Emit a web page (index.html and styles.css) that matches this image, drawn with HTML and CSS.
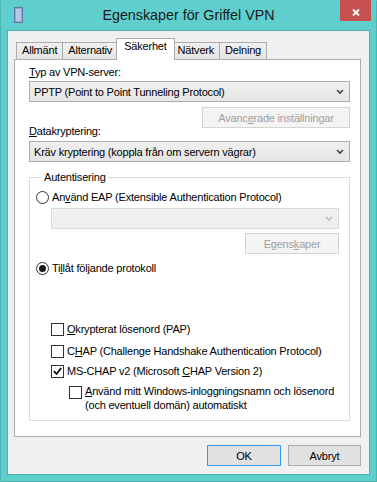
FILE: index.html
```html
<!DOCTYPE html>
<html lang="sv">
<head>
    <meta charset="UTF-8">
    <title>Egenskaper för Griffel VPN</title>
    <link rel="stylesheet" href="styles.css">
</head>
<body>

    <div class="window">
        <div class="titlebar">
            <span class="app-icon">
                <svg width="9" height="16" viewBox="0 0 9 16">
                    <rect x="0.5" y="0.5" width="8" height="15" fill="#8fa9d0" stroke="#5f7aa8"/>
                    <path d="M2 3h5M2 5h5M2 7h5M2 9h5M2 11h5M2 13h5" stroke="#dfe8f5"/>
                </svg>
            </span>
            <span class="title">Egenskaper för Griffel VPN</span>
            <span class="close">
                <svg width="8" height="7" viewBox="0 0 8 7">
                    <path d="M1 0.5L7 6.5M7 0.5L1 6.5" stroke="#fff" stroke-width="1.8"/>
                </svg>
            </span>
        </div>

        <div class="client">
            <div class="tabs">
                <span class="tab">Allmänt</span>
                <span class="tab">Alternativ</span>
                <span class="tab active">Säkerhet</span>
                <span class="tab">Nätverk</span>
                <span class="tab">Delning</span>
            </div>

            <div class="panel">
                <div class="field-label"><u>T</u>yp av VPN-server:</div>
                <div class="combo">
                    <span>PPTP (Point to Point Tunneling Protocol)</span>
                    <svg class="chevron" width="8" height="6" viewBox="0 0 8 6"><path d="M1 1l3 3 3-3" fill="none" stroke="#444" stroke-width="1.6"/></svg>
                </div>
                <button class="btn disabled advanced">Avanc<u>e</u>rade inställningar</button>

                <div class="field-label crypto"><u>D</u>atakryptering:</div>
                <div class="combo combo-crypto">
                    <span>Kräv kryptering (koppla från om servern vägrar)</span>
                    <svg class="chevron" width="8" height="6" viewBox="0 0 8 6"><path d="M1 1l3 3 3-3" fill="none" stroke="#444" stroke-width="1.6"/></svg>
                </div>

                <fieldset class="auth">
                    <legend>Autentisering</legend>

                    <div class="row">
                        <span class="radio"></span>
                        <span>An<u>v</u>änd EAP (Extensible Authentication Protocol)</span>
                    </div>
                    <div class="combo disabled eap-combo">
                        <span></span>
                        <svg class="chevron" width="8" height="6" viewBox="0 0 8 6"><path d="M1 1l3 3 3-3" fill="none" stroke="#bcbcbc" stroke-width="1.6"/></svg>
                    </div>
                    <button class="btn disabled props">Egens<u>k</u>aper</button>

                    <div class="row allow">
                        <span class="radio on"></span>
                        <span>Ti<u>l</u>låt följande protokoll</span>
                    </div>

                    <div class="row option first">
                        <span class="check"></span>
                        <span><u>O</u>krypterat lösenord (PAP)</span>
                    </div>
                    <div class="row option chap">
                        <span class="check"></span>
                        <span>C<u>H</u>AP (Challenge Handshake Authentication Protocol)</span>
                    </div>
                    <div class="row option mschap">
                        <span class="check">
                            <svg width="11" height="11" viewBox="0 0 11 11"><path d="M2 5.2l2.6 2.8L9.2 2" fill="none" stroke="#000" stroke-width="1.7"/></svg>
                        </span>
                        <span>MS-CHAP v2 (Microsoft <u>C</u>HAP Version 2)</span>
                    </div>
                    <div class="sub-option">
                        <span class="check"></span>
                        <span><u>A</u>nvänd mitt Windows-inloggningsnamn och lösenord<br>(och eventuell domän) automatiskt</span>
                    </div>
                </fieldset>
            </div>

            <div class="actions">
                <button class="btn default ok">OK</button>
                <button class="btn cancel">Avbryt</button>
            </div>
        </div>
    </div>

</body>
</html>
```

FILE: styles.css
```css
body {
    margin: 0;
    font-family: "Liberation Sans", Arial, sans-serif;
    font-size: 11px;
    letter-spacing: -0.2px;
    color: #000;
    background: #5ecfcc;
}
.window {
    width: 377px;
    height: 482px;
    box-sizing: border-box;
    border: 1px solid #4db5b2;
    border-top-color: #5ecfcc;
    background: #5ecfcc;
    display: flex;
    flex-direction: column;
}
.titlebar {
    height: 29px;
    display: grid;
    grid-template-columns: 1fr auto 1fr;
    align-items: start;
}
.app-icon {
    padding: 6px 0 0 13px;
    line-height: 0;
}
.title {
    font-size: 14.3px;
    line-height: 20px;
    padding-top: 4px;
    letter-spacing: 0;
    color: #1b1b1b;
}
.close {
    justify-self: end;
    width: 31px;
    height: 21px;
    margin: -1px 5px 0 0;
    background: #c75050;
    display: flex;
    justify-content: center;
    align-items: flex-start;
    padding-top: 9px;
    box-sizing: border-box;
}
.client {
    flex: 1;
    margin: 0 6px 6px;
    padding: 0 8px 0 6px;
    border: 1px solid #4ab1ae;
    background: #f0f0f0;
}
.tabs {
    display: flex;
    align-items: flex-end;
    height: 21px;
    margin: 7px 0 0 2px;
}
.tab {
    height: 17px;
    box-sizing: border-box;
    padding: 0 5px;
    border: 1px solid #acacac;
    border-bottom: 0;
    background: linear-gradient(#f0f0f0, #e5e5e5);
    line-height: 15px;
}
.tab + .tab {
    margin-left: -1px;
}
.tab.active {
    position: relative;
    height: 22px;
    margin: 0 -2px -1px;
    padding: 0 7px;
    background: #fff;
}
.panel {
    border: 1px solid #acacac;
    background: #fff;
    padding: 6px 10px 15px 14px;
}
.field-label {
    line-height: 13px;
}
.combo {
    height: 21px;
    box-sizing: border-box;
    margin-top: 2px;
    padding: 0 5px 0 4px;
    border: 1px solid #acacac;
    background: linear-gradient(#f0f0f0, #e5e5e5);
    display: flex;
    align-items: center;
    justify-content: space-between;
}
.combo.disabled {
    border-color: #d9d9d9;
    background: #efefef;
}
.btn {
    height: 21px;
    box-sizing: border-box;
    padding: 0;
    border: 1px solid #acacac;
    background: #e1e1e1;
    font: inherit;
    letter-spacing: inherit;
    color: #000;
}
.btn.disabled {
    border-color: #d5d5d5;
    background: #f4f4f4;
    color: #a0a0a0;
}
.advanced {
    display: block;
    width: 148px;
    margin: 5px 0 0 auto;
}
.field-label.crypto {
    margin-top: -3px;
}
.combo-crypto {
    margin-top: 3px;
}
.auth {
    margin: 9px 0 0;
    padding: 7px 10px 8px 6px;
    border: 1px solid #dcdcdc;
}
.auth legend {
    margin-left: 6px;
    padding: 0 2px;
    line-height: 13px;
}
.row {
    display: flex;
    align-items: center;
    gap: 3px;
    height: 13px;
    line-height: 13px;
}
.radio {
    width: 13px;
    height: 13px;
    box-sizing: border-box;
    border: 1px solid #333;
    border-radius: 50%;
    background: #fff;
    flex: none;
    display: flex;
    align-items: center;
    justify-content: center;
}
.radio.on::after {
    content: "";
    width: 7px;
    height: 7px;
    border-radius: 50%;
    background: #1a1a1a;
}
.eap-combo {
    margin: 4px 0 0 15px;
}
.props {
    display: block;
    width: 94px;
    margin: 4px 0 0 auto;
}
.row.allow {
    margin-top: 8px;
}
.option {
    margin-left: 15px;
}
.option.first {
    margin-top: 48px;
}
.option.chap {
    margin-top: 9px;
}
.option.mschap {
    margin-top: 7px;
}
.check {
    width: 13px;
    height: 13px;
    box-sizing: border-box;
    border: 1px solid #333;
    background: #fff;
    flex: none;
    line-height: 0;
}
.sub-option {
    display: flex;
    align-items: flex-start;
    gap: 3px;
    margin: 6px 0 0 33px;
    line-height: 14px;
}
.sub-option .check {
    margin-top: 2px;
}
.actions {
    display: flex;
    justify-content: flex-end;
    gap: 7px;
    margin-top: 8px;
}
.ok {
    width: 74px;
    border-color: #3399ff;
}
.cancel {
    width: 73px;
}
```
